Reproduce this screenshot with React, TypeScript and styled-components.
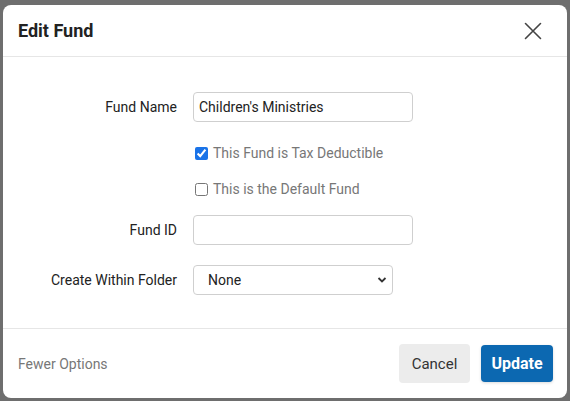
import React from 'react';
import styled, { createGlobalStyle } from 'styled-components';

const GlobalStyle = createGlobalStyle`
  html, body {
    margin: 0;
    padding: 0;
    background: #6e6e6e;
    font-family: Roboto, "Liberation Sans", Arial, sans-serif;
  }
`;

const Overlay = styled.div`
  width: 570px;
  height: 401px;
  padding: 5px 3px 3px 3px;
  box-sizing: border-box;
  background: #6e6e6e;
  overflow: hidden;
`;

const Modal = styled.div`
  background: #fff;
  border-radius: 8px;
  height: 393px;
  display: flex;
  flex-direction: column;
  overflow: hidden;
`;

const Header = styled.div`
  height: 51px;
  display: flex;
  align-items: center;
  justify-content: space-between;
  padding: 0 24px 0 15px;
  border-bottom: 1px solid #e6e6e6;
`;

const Title = styled.h2`
  margin: 0;
  font-size: 18px;
  font-weight: 700;
  color: #222;
`;

const CloseButton = styled.button`
  border: none;
  background: none;
  padding: 0;
  width: 20px;
  height: 20px;
  display: flex;
  align-items: center;
  justify-content: center;
  cursor: pointer;
`;

const Body = styled.div`
  flex: 1;
  padding-top: 35px;
`;

const Form = styled.div`
  display: grid;
  grid-template-columns: 174px 220px;
  column-gap: 16px;
  align-items: center;
`;

const Label = styled.label<{ $top?: number }>`
  justify-self: end;
  font-size: 14px;
  color: #222;
  margin-top: ${p => p.$top || 0}px;
`;

const Cell = styled.div<{ $top?: number; $height: number }>`
  grid-column: 2;
  height: ${p => p.$height}px;
  margin-top: ${p => p.$top || 0}px;
  display: flex;
  align-items: center;
`;

const TextInput = styled.input`
  box-sizing: border-box;
  width: 220px;
  height: 30px;
  border: 1px solid #cfcfcf;
  border-radius: 4px;
  padding: 0 5px;
  font-family: inherit;
  font-size: 14px;
  color: #222;
  outline: none;
`;

const CheckLabel = styled.label`
  display: flex;
  align-items: center;
  gap: 5px;
  font-size: 14px;
  color: #777;
  padding-left: 2px;
`;

const CheckBox = styled.input`
  margin: 0;
  width: 13px;
  height: 13px;
  accent-color: #1a73e8;
`;

const SelectWrap = styled.div`
  position: relative;
  width: 200px;
  height: 30px;
`;

const Select = styled.select`
  appearance: none;
  box-sizing: border-box;
  width: 200px;
  height: 30px;
  border: 1px solid #cfcfcf;
  border-radius: 4px;
  background: #fff;
  padding: 0 14px;
  font-family: inherit;
  font-size: 14px;
  color: #222;
`;

const Chevron = styled.svg`
  position: absolute;
  right: 6px;
  top: 11px;
  pointer-events: none;
`;

const Footer = styled.div`
  height: 69px;
  border-top: 1px solid #e6e6e6;
  display: flex;
  align-items: center;
  justify-content: space-between;
  padding: 0 14px 0 15px;
`;

const LinkText = styled.a`
  font-size: 14px;
  color: #777;
  cursor: pointer;
`;

const Actions = styled.div`
  display: flex;
  align-items: center;
  gap: 11px;
`;

const Button = styled.button<{ $primary?: boolean }>`
  height: ${p => (p.$primary ? 37 : 39)}px;
  width: ${p => (p.$primary ? 72 : 71)}px;
  border: none;
  border-radius: 4px;
  font-family: inherit;
  font-size: ${p => (p.$primary ? 16 : 15)}px;
  font-weight: ${p => (p.$primary ? 700 : 400)};
  color: ${p => (p.$primary ? '#fff' : '#333')};
  background: ${p => (p.$primary ? '#0c68b1' : '#ececec')};
  box-shadow: ${p => (p.$primary ? '0 1px 3px rgba(0,0,0,0.15)' : 'none')};
  cursor: pointer;
`;

export default function App() {
  return (
    <>
      <GlobalStyle />
      <Overlay>
        <Modal>
          <Header>
            <Title>Edit Fund</Title>
            <CloseButton aria-label="Close">
              <svg width="18" height="18" viewBox="0 0 18 18">
                <path d="M1.5 1.5 L16.5 16.5 M16.5 1.5 L1.5 16.5" stroke="#444" strokeWidth="1.6" strokeLinecap="round" />
              </svg>
            </CloseButton>
          </Header>
          <Body>
            <Form>
              <Label>Fund Name</Label>
              <Cell $height={30}>
                <TextInput defaultValue="Children's Ministries" />
              </Cell>
              <Cell $height={22} $top={20}>
                <CheckLabel>
                  <CheckBox type="checkbox" defaultChecked />
                  This Fund is Tax Deductible
                </CheckLabel>
              </Cell>
              <Cell $height={22} $top={14}>
                <CheckLabel>
                  <CheckBox type="checkbox" />
                  This is the Default Fund
                </CheckLabel>
              </Cell>
              <Label $top={15}>Fund ID</Label>
              <Cell $height={30} $top={15}>
                <TextInput />
              </Cell>
              <Label $top={20}>Create Within Folder</Label>
              <Cell $height={30} $top={20}>
                <SelectWrap>
                  <Select defaultValue="none">
                    <option value="none">None</option>
                  </Select>
                  <Chevron width="10" height="8" viewBox="0 0 10 8">
                    <path d="M1.5 2 L5 5.5 L8.5 2" fill="none" stroke="#333" strokeWidth="1.8" />
                  </Chevron>
                </SelectWrap>
              </Cell>
            </Form>
          </Body>
          <Footer>
            <LinkText>Fewer Options</LinkText>
            <Actions>
              <Button>Cancel</Button>
              <Button $primary>Update</Button>
            </Actions>
          </Footer>
        </Modal>
      </Overlay>
    </>
  );
}
